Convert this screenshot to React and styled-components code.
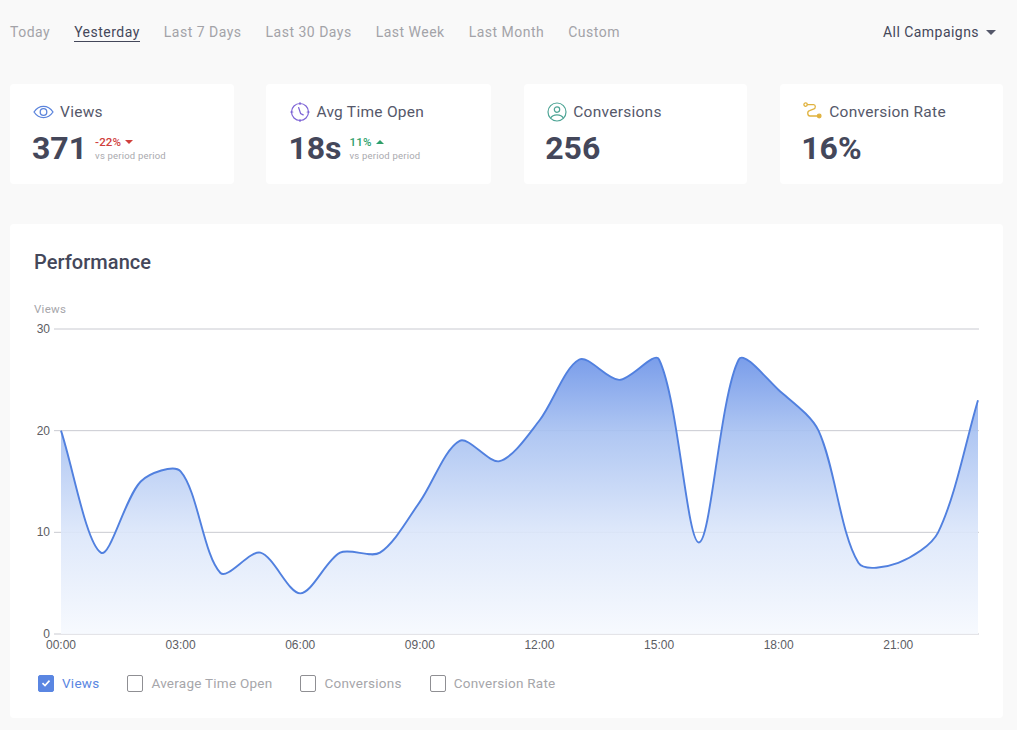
import React from "react";
import styled, { createGlobalStyle } from "styled-components";

const Global = createGlobalStyle`
  html, body { margin: 0; padding: 0; background: #f9f9f9; }
  body { font-family: Roboto, "Liberation Sans", sans-serif; color: #44475a; }
`;

const Page = styled.div`
  width: 1017px;
  height: 730px;
  overflow: hidden;
  box-sizing: border-box;
  padding: 22px 14px 0 10px;
`;

const TopBar = styled.div`
  display: flex;
  align-items: flex-start;
  justify-content: space-between;
  height: 62px;
`;

const Tabs = styled.div`
  display: flex;
  gap: 24px;
`;

const Tab = styled.div`
  font-size: 14px;
  line-height: 20px;
  letter-spacing: 0.49px;
  height: 19px;
  color: ${(p) => (p.$active ? "#44475a" : "#a3a3a8")};
  border-bottom: 1px solid ${(p) => (p.$active ? "#44475a" : "transparent")};
`;

const CampaignSelect = styled.div`
  display: flex;
  align-items: center;
  gap: 7px;
  font-size: 14px;
  line-height: 20px;
  letter-spacing: 0.45px;
  color: #44475a;
  margin-right: 7px;
`;

const Caret = styled.span`
  width: 0;
  height: 0;
  border-left: 5px solid transparent;
  border-right: 5px solid transparent;
  border-top: 5px solid #55586a;
`;

const Stats = styled.div`
  display: grid;
  grid-template-columns: 223.6px 225px 223.2px 1fr;
  column-gap: 32.8px;
  height: 100px;
`;

const StatCard = styled.div`
  background: #fff;
  border-radius: 4px;
  box-sizing: border-box;
  padding: 17px 22px 0 ${(p) => p.$inset}px;
`;

const StatHead = styled.div`
  display: flex;
  align-items: center;
  gap: ${(p) => p.$gap}px;
  height: 22px;
  padding-left: ${(p) => p.$iconInset}px;
  font-size: 15.5px;
  letter-spacing: 0.27px;
  color: #55586a;
`;

const StatBody = styled.div`
  display: flex;
  align-items: flex-start;
  gap: 8px;
  margin-top: 5px;
`;

const StatValue = styled.div`
  font-size: 32px;
  line-height: 40px;
  font-weight: 700;
  letter-spacing: 0;
  color: #44475a;
`;

const DeltaBox = styled.div`
  display: flex;
  flex-direction: column;
  padding-top: 7px;
`;

const Delta = styled.div`
  display: flex;
  align-items: center;
  gap: 4px;
  font-size: 11.5px;
  line-height: 14px;
  font-weight: 500;
  letter-spacing: 0.15px;
  color: ${(p) => (p.$up ? "#2e9f6b" : "#d0403c")};
`;

const Arrow = styled.span`
  width: 0;
  height: 0;
  border-left: 4.5px solid transparent;
  border-right: 4.5px solid transparent;
  ${(p) => (p.$up ? "border-bottom: 4.5px solid #2e9f6b;" : "border-top: 4.5px solid #d0403c;")}
`;

const DeltaNote = styled.div`
  font-size: 9.5px;
  line-height: 14px;
  letter-spacing: 0.2px;
  color: #a9a9ae;
`;

const PerfCard = styled.div`
  margin-top: 40px;
  height: 494px;
  background: #fff;
  border-radius: 4px;
  box-sizing: border-box;
  padding: 25px 24px 0;
`;

const PerfTitle = styled.div`
  font-size: 20px;
  line-height: 26px;
  font-weight: 500;
  letter-spacing: 0.05px;
  color: #44475a;
`;

const ChartFrame = styled.svg`
  display: block;
  width: 993px;
  height: 368px;
  margin: 15px 0 0 -24px;
`;

const AxisText = styled.text`
  font-family: "Liberation Sans", Arial, sans-serif;
  font-size: 12px;
  fill: #5c5d63;
`;

const AxisTitle = styled.text`
  font-family: Roboto, sans-serif;
  font-size: 11.5px;
  letter-spacing: 0.3px;
  fill: #a6a6aa;
`;

const Legend = styled.div`
  display: flex;
  align-items: center;
  gap: 28px;
  margin: 16px 0 0 4px;
`;

const LegendItem = styled.label`
  display: flex;
  align-items: center;
  gap: 8px;
  font-size: 13.5px;
  line-height: 18px;
  letter-spacing: 0.25px;
  color: ${(p) => (p.$checked ? "#5a86e2" : "#a6a6aa")};
`;

const CheckBox = styled.span`
  width: 16px;
  height: 17px;
  box-sizing: border-box;
  border-radius: 2px;
  border: 1.5px solid ${(p) => (p.$checked ? "#5a86e2" : "#8f8f93")};
  background: ${(p) => (p.$checked ? "#5a86e2" : "#fff")};
  display: flex;
  align-items: center;
  justify-content: center;
`;

const EyeIcon = () => (
  <svg width="21" height="22" viewBox="0 0 21 22" fill="none" stroke="#5b84dc" strokeWidth="1.3">
    <path d="M1 11C3.6 7.2 6.8 5.4 10.5 5.4S17.4 7.2 20 11c-2.6 3.8-5.8 5.6-9.5 5.6S3.6 14.8 1 11Z" />
    <circle cx="10.5" cy="11" r="3.3" />
  </svg>
);

const ClockIcon = () => (
  <svg width="20" height="22" viewBox="0 0 20 22" fill="none" stroke="#7d63d6" strokeWidth="1.2" strokeLinecap="round">
    <circle cx="10" cy="11" r="8.5" />
    <path d="M10 1.5v2M10 18.5v2M.8 11h2M17.2 11h2M8.6 6.5 10.6 12.5l2.6 1.4" />
  </svg>
);

const UserIcon = () => (
  <svg width="20" height="22" viewBox="0 0 20 22" fill="none" stroke="#4fa596" strokeWidth="1.2">
    <circle cx="10" cy="11" r="9" />
    <circle cx="10" cy="8.6" r="2.7" />
    <path d="M3.6 17.2c1.2-2.4 3.4-3.4 6.4-3.4s5.2 1 6.4 3.4" />
  </svg>
);

const RouteIcon = () => (
  <svg width="20" height="22" viewBox="0 0 20 22" fill="none" stroke="#e0b23e" strokeWidth="1.3" strokeLinecap="round">
    <circle cx="2.6" cy="3.6" r="1.7" />
    <path d="M4.4 3.6h6.2c2 0 2.6 3.8-.2 4.6L6.6 9.6c-2.8.8-2.2 5.4.4 5.4h8" />
    <circle cx="16.2" cy="15" r="1.8" fill="#e0b23e" />
  </svg>
);

const tabs = ["Today", "Yesterday", "Last 7 Days", "Last 30 Days", "Last Week", "Last Month", "Custom"];

const stats = [
  { label: "Views", value: "371", delta: "-22%", up: false, icon: <EyeIcon />, inset: 22, iconInset: 1, gap: 6 },
  { label: "Avg Time Open", value: "18s", delta: "11%", up: true, icon: <ClockIcon />, inset: 22, iconInset: 2, gap: 6 },
  { label: "Conversions", value: "256", icon: <UserIcon />, inset: 21, iconInset: 2, gap: 6 },
  { label: "Conversion Rate", value: "16%", icon: <RouteIcon />, inset: 21, iconInset: 2, gap: 6 },
];

const data = [20, 8, 15, 16, 6, 8, 4, 8, 8, 13, 19, 17, 21, 27, 25, 27, 9, 27, 24, 20, 7, 7, 10, 23];

const X0 = 51;
const X1 = 968;
const OFFSET_Y = 290;
const PLOT_TOP = 329 - OFFSET_Y;
const PLOT_BOTTOM = 634 - OFFSET_Y;
const px = (i) => X0 + (i * (X1 - X0)) / 23;
const py = (v) => PLOT_BOTTOM - (v * (PLOT_BOTTOM - PLOT_TOP)) / 30;

function splinePath() {
  const pts = data.map((v, i) => ({ x: px(i), y: py(v) }));
  const t = 0.3;
  const ctrl = pts.map((p, i) => {
    const prev = pts[i - 1] || p;
    const next = pts[i + 1] || p;
    const d01 = Math.hypot(p.x - prev.x, p.y - prev.y);
    const d12 = Math.hypot(next.x - p.x, next.y - p.y);
    const s01 = d01 / (d01 + d12 || 1);
    const s12 = d12 / (d01 + d12 || 1);
    return {
      bx: p.x - t * s01 * (next.x - prev.x),
      by: p.y - t * s01 * (next.y - prev.y),
      ax: p.x + t * s12 * (next.x - prev.x),
      ay: p.y + t * s12 * (next.y - prev.y),
    };
  });
  let d = `M${pts[0].x} ${pts[0].y}`;
  for (let i = 1; i < pts.length; i++) {
    d += `C${ctrl[i - 1].ax} ${ctrl[i - 1].ay} ${ctrl[i].bx} ${ctrl[i].by} ${pts[i].x} ${pts[i].y}`;
  }
  return d;
}

const Chart = () => {
  const line = splinePath();
  const base = py(0);
  return (
    <ChartFrame viewBox="0 0 993 368">
      <defs>
        <linearGradient id="areaFill" x1="0" y1={py(27)} x2="0" y2={base} gradientUnits="userSpaceOnUse">
          <stop offset="0" stopColor="#6d94e8" />
          <stop offset="0.26" stopColor="#a6c0f1" />
          <stop offset="0.63" stopColor="#dbe6fa" />
          <stop offset="1" stopColor="#f6f9fe" />
        </linearGradient>
      </defs>
      <AxisTitle x="24" y="23">Views</AxisTitle>
      {[30, 20, 10, 0].map((v) => (
        <g key={v}>
          <line x1="44" x2="969" y1={py(v)} y2={py(v)} stroke="#c9cad1" strokeWidth="1" />
          <AxisText x="40" y={py(v) + 4} textAnchor="end">{v}</AxisText>
        </g>
      ))}
      <path d={`${line}L${px(23)} ${base}L${px(0)} ${base}Z`} fill="url(#areaFill)" fillOpacity="0.9" />
      <path d={line} fill="none" stroke="#5180df" strokeWidth="1.9" />
      {[0, 3, 6, 9, 12, 15, 18, 21].map((h) => (
        <AxisText key={h} x={px(h)} y="359" textAnchor="middle">
          {String(h).padStart(2, "0")}:00
        </AxisText>
      ))}
    </ChartFrame>
  );
};

const legend = [
  { label: "Views", checked: true },
  { label: "Average Time Open" },
  { label: "Conversions" },
  { label: "Conversion Rate" },
];

export default function App() {
  return (
    <>
      <Global />
      <Page>
        <TopBar>
          <Tabs>
            {tabs.map((t) => (
              <Tab key={t} $active={t === "Yesterday"}>{t}</Tab>
            ))}
          </Tabs>
          <CampaignSelect>
            All Campaigns
            <Caret />
          </CampaignSelect>
        </TopBar>
        <Stats>
          {stats.map((s) => (
            <StatCard key={s.label} $inset={s.inset}>
              <StatHead $iconInset={s.iconInset} $gap={s.gap}>
                {s.icon}
                {s.label}
              </StatHead>
              <StatBody>
                <StatValue>{s.value}</StatValue>
                {s.delta && (
                  <DeltaBox>
                    <Delta $up={s.up}>
                      {s.delta}
                      <Arrow $up={s.up} />
                    </Delta>
                    <DeltaNote>vs period period</DeltaNote>
                  </DeltaBox>
                )}
              </StatBody>
            </StatCard>
          ))}
        </Stats>
        <PerfCard>
          <PerfTitle>Performance</PerfTitle>
          <Chart />
          <Legend>
            {legend.map((l) => (
              <LegendItem key={l.label} $checked={l.checked}>
                <CheckBox $checked={l.checked}>
                  {l.checked && (
                    <svg width="10" height="10" viewBox="0 0 10 10" fill="none" stroke="#fff" strokeWidth="1.6">
                      <path d="M1.5 5.2 4 7.6 8.5 2.6" />
                    </svg>
                  )}
                </CheckBox>
                {l.label}
              </LegendItem>
            ))}
          </Legend>
        </PerfCard>
      </Page>
    </>
  );
}
